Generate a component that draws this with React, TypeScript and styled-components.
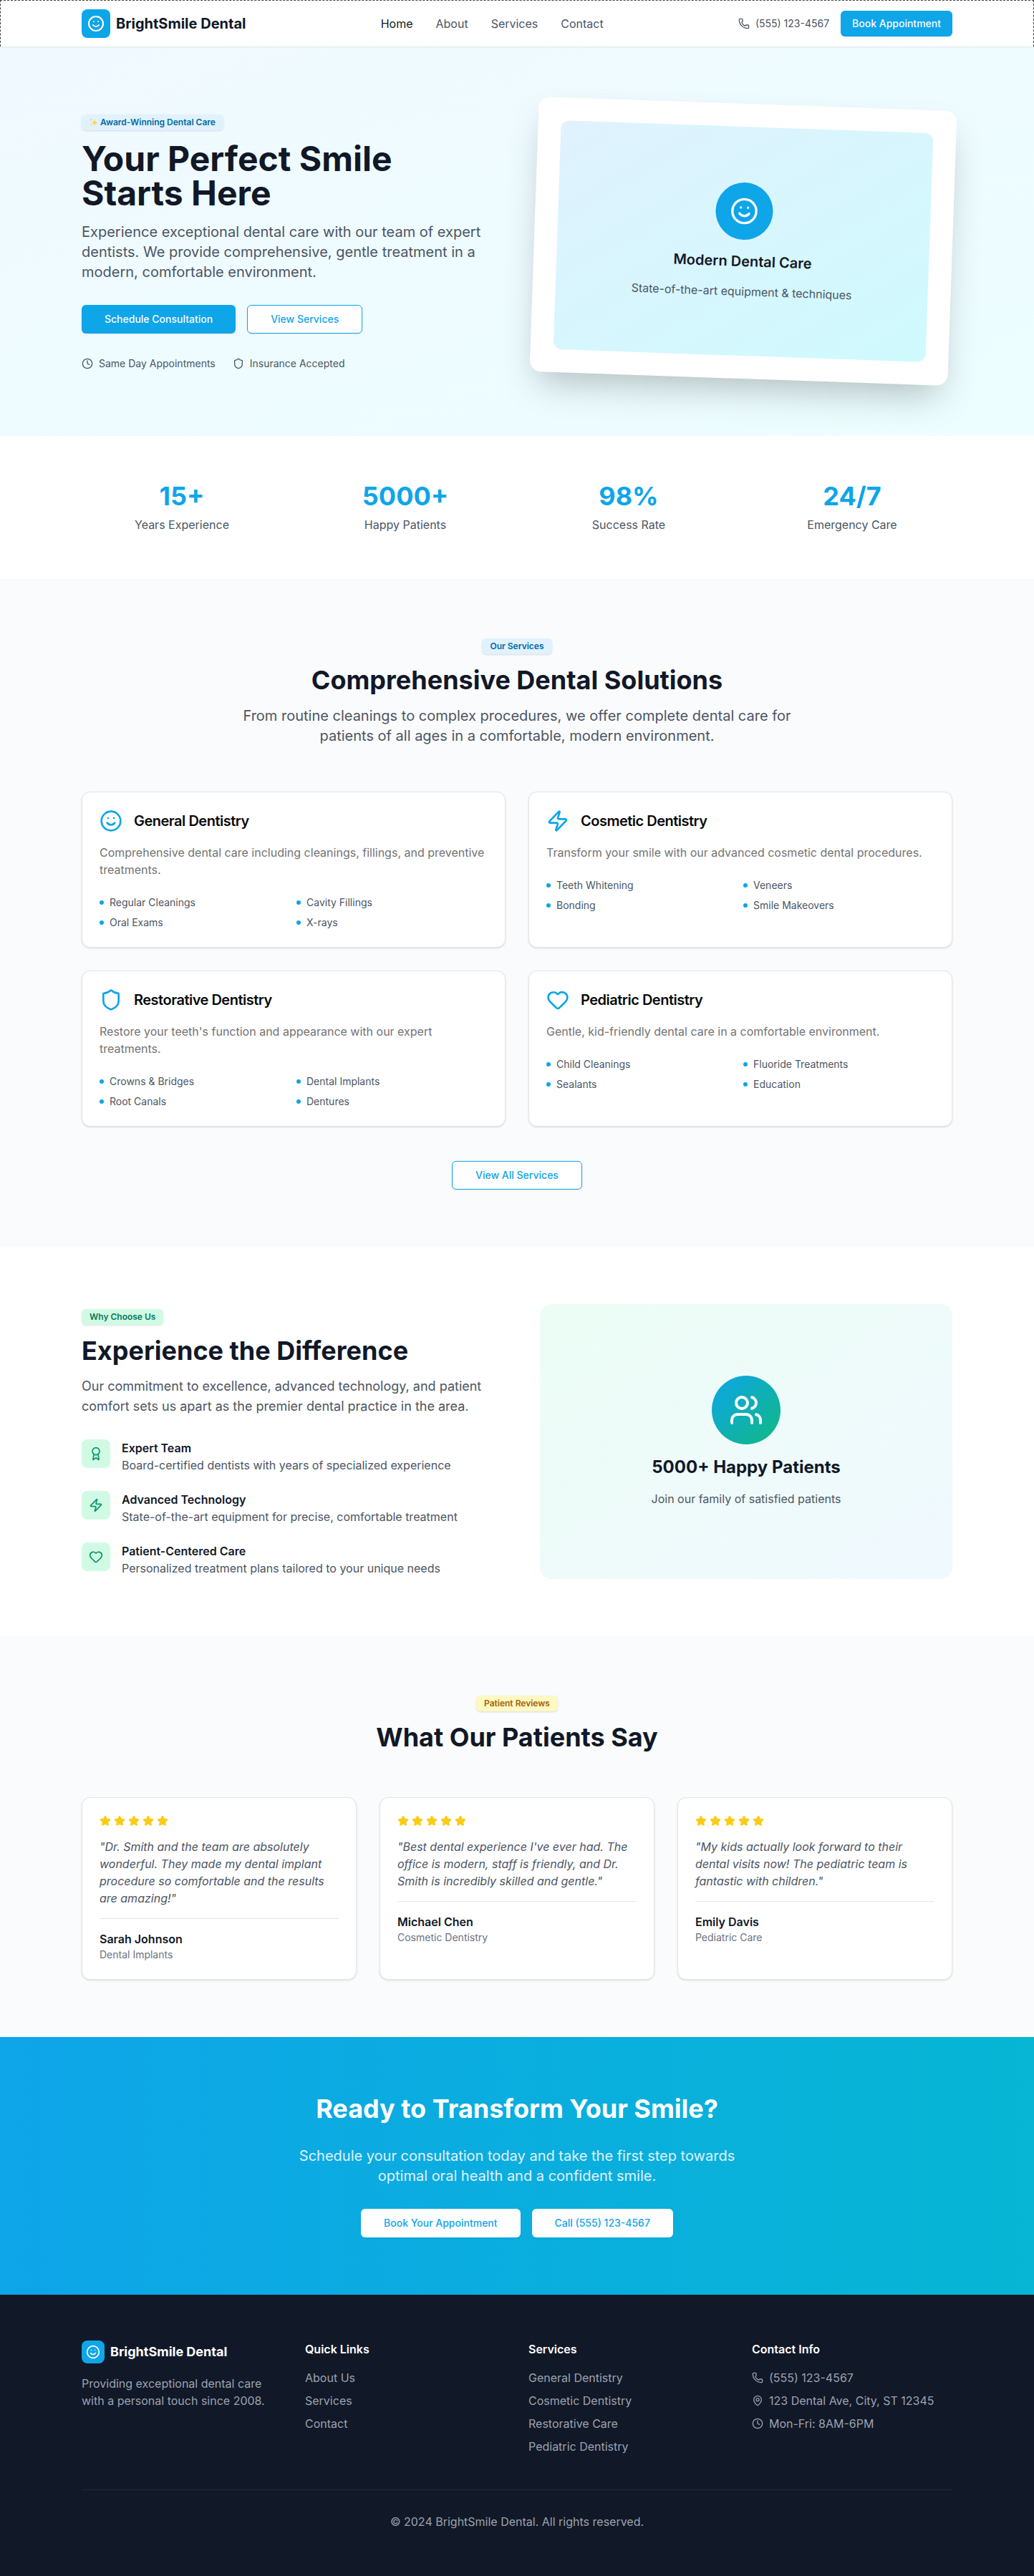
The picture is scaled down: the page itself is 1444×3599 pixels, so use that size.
import React from "react";
import styled, { createGlobalStyle } from "styled-components";
import {
  Award,
  Clock,
  Heart,
  MapPin,
  Phone,
  Shield,
  Smile,
  Star,
  Users,
  Zap,
  type LucideIcon,
} from "lucide-react";

const c = {
  primary: "#0ea5e9",
  ink: "#111827",
  body: "#4b5563",
  faint: "#9ca3af",
  line: "#e5e5e5",
  panel: "#fafbfc",
};

const GlobalStyle = createGlobalStyle`
  *, *::before, *::after { box-sizing: border-box; }
  body {
    margin: 0;
    background: #ffffff;
    color: #0a0a0a;
    font-family: Inter, "Noto Sans", "Liberation Sans", sans-serif;
    font-size: 16px;
    line-height: 24px;
  }
  h1, h2, h3, h4, p, ul, blockquote, figure { margin: 0; padding: 0; }
  ul { list-style: none; }
  a { color: inherit; text-decoration: none; }
  svg { display: block; flex-shrink: 0; }
`;

const Container = styled.div`
  width: 100%;
  max-width: 1280px;
  margin: 0 auto;
  padding: 0 32px;
`;

/* ---------- shared parts ---------- */

const Button = styled.button<{ $variant?: "solid" | "outline" | "white"; $size?: "md" | "lg" }>`
  display: inline-flex;
  align-items: center;
  justify-content: center;
  height: ${(p) => (p.$size === "md" ? 36 : 40)}px;
  padding: 0 ${(p) => (p.$size === "md" ? 16 : 32)}px;
  border: ${(p) => (p.$variant === "outline" ? `1px solid ${c.primary}` : "0")};
  border-radius: 6px;
  background: ${(p) => (p.$variant ? "#ffffff" : c.primary)};
  color: ${(p) => (p.$variant ? c.primary : "#fafafa")};
  box-shadow: 0 1px 2px rgba(0, 0, 0, 0.08);
  font: inherit;
  font-size: 14px;
  font-weight: 500;
  line-height: 20px;
  white-space: nowrap;
  cursor: pointer;
`;

const tones = {
  sky: { bg: "#e0f2fe", fg: "#0369a1" },
  green: { bg: "#d1fae5", fg: "#047857" },
  yellow: { bg: "#fef9c3", fg: "#a16207" },
};

const BadgeLine = styled.div`
  height: 25px;
  padding-top: 3px;
  margin-bottom: 16px;
`;

const Badge = styled.span<{ $tone: keyof typeof tones }>`
  display: inline-flex;
  align-items: center;
  gap: 3px;
  height: 22px;
  padding: 0 11px;
  border-radius: 6px;
  background: ${(p) => tones[p.$tone].bg};
  color: ${(p) => tones[p.$tone].fg};
  box-shadow: 0 1px 3px rgba(0, 0, 0, 0.1), 0 1px 2px -1px rgba(0, 0, 0, 0.1);
  font-size: 12px;
  font-weight: 600;
  line-height: 16px;
  vertical-align: top;
`;

const Heading = styled.h2`
  font-size: 36px;
  font-weight: 700;
  line-height: 40px;
  color: ${c.ink};
`;

const Lead = styled.p`
  margin-top: 16px;
  font-size: 20px;
  line-height: 28px;
  color: ${c.body};
`;

const SectionHead = styled.div`
  max-width: 768px;
  margin: 0 auto 64px;
  text-align: center;
`;

const Section = styled.section<{ $tint?: boolean }>`
  padding: 80px 0;
  background: ${(p) => (p.$tint ? c.panel : "#ffffff")};
`;

const Card = styled.article`
  padding: 24px;
  border: 1px solid ${c.line};
  border-radius: 12px;
  background: #ffffff;
  box-shadow: 0 1px 3px rgba(0, 0, 0, 0.1), 0 1px 2px -1px rgba(0, 0, 0, 0.1);
`;

/* ---------- header ---------- */

const Header = styled.header`
  position: relative;
  z-index: 1;
  border: 1px dashed #404040;
  border-bottom: 0;
  background: #ffffff;
  box-shadow: 0 1px 0 #e5e7eb, 0 1px 2px rgba(0, 0, 0, 0.05);
`;

const HeaderRow = styled(Container)`
  display: flex;
  align-items: center;
  justify-content: space-between;
  height: 64px;
`;

const Brand = styled.a<{ $small?: boolean }>`
  display: flex;
  align-items: center;
  gap: 8px;
  font-size: ${(p) => (p.$small ? 18 : 20)}px;
  line-height: 28px;
  font-weight: 700;
  color: ${(p) => (p.$small ? "#ffffff" : c.ink)};
`;

const BrandMark = styled.span<{ $small?: boolean }>`
  display: grid;
  place-items: center;
  width: ${(p) => (p.$small ? 32 : 40)}px;
  height: ${(p) => (p.$small ? 32 : 40)}px;
  border-radius: 8px;
  background: ${c.primary};
  color: #ffffff;
`;

const Nav = styled.nav`
  display: flex;
  gap: 32px;
`;

const NavLink = styled.a<{ $active?: boolean }>`
  color: ${(p) => (p.$active ? c.ink : c.body)};
`;

const HeaderActions = styled.div`
  display: flex;
  align-items: center;
  gap: 16px;
`;

const IconText = styled.span`
  display: flex;
  align-items: center;
  gap: 8px;
  font-size: 14px;
  line-height: 20px;
  color: ${c.body};
`;

/* ---------- hero ---------- */

const Hero = styled.section`
  padding: 80px 0;
  background: linear-gradient(to bottom right, #f0f9ff, #ecfeff);
`;

const Split = styled(Container)<{ $gap: number }>`
  display: grid;
  grid-template-columns: 1fr 1fr;
  align-items: center;
  gap: ${(p) => p.$gap}px;
`;

const HeroTitle = styled.h1`
  font-size: 48px;
  font-weight: 700;
  line-height: 48px;
  color: ${c.ink};
`;

const ButtonRow = styled.div<{ $center?: boolean; $top: number }>`
  display: flex;
  flex-wrap: wrap;
  justify-content: ${(p) => (p.$center ? "center" : "flex-start")};
  gap: 16px;
  margin-top: ${(p) => p.$top}px;
`;

const Perks = styled.div`
  display: flex;
  gap: 24px;
  margin-top: 32px;
`;

const TiltCard = styled.div`
  padding: 32px;
  border-radius: 16px;
  background: #ffffff;
  box-shadow: 0 25px 50px -12px rgba(0, 0, 0, 0.25);
  transform: rotate(2deg);
`;

const Showcase = styled.div<{ $kind: "hero" | "why" }>`
  display: flex;
  flex-direction: column;
  align-items: center;
  justify-content: center;
  gap: 16px;
  height: ${(p) => (p.$kind === "hero" ? 320 : 384)}px;
  border-radius: ${(p) => (p.$kind === "hero" ? 12 : 16)}px;
  background: ${(p) =>
    p.$kind === "hero"
      ? "linear-gradient(to bottom right, #e0f2fe, #cffafe)"
      : "linear-gradient(to bottom right, #ecfdf5, #f0f9ff)"};
  color: ${c.body};
  text-align: center;
`;

const Disc = styled.span<{ $kind: "hero" | "why" }>`
  display: grid;
  place-items: center;
  width: ${(p) => (p.$kind === "hero" ? 80 : 96)}px;
  height: ${(p) => (p.$kind === "hero" ? 80 : 96)}px;
  border-radius: 50%;
  background: ${(p) =>
    p.$kind === "hero" ? c.primary : "linear-gradient(to bottom right, #0ea5e9, #10b981)"};
  color: #ffffff;
`;

const ShowcaseTitle = styled.h3<{ $kind: "hero" | "why" }>`
  font-size: ${(p) => (p.$kind === "hero" ? 20 : 24)}px;
  line-height: ${(p) => (p.$kind === "hero" ? 28 : 32)}px;
  font-weight: ${(p) => (p.$kind === "hero" ? 600 : 700)};
  color: ${c.ink};
`;

/* ---------- stats ---------- */

const StatsBand = styled.section`
  padding: 64px 0;
  background: #ffffff;
`;

const StatsGrid = styled(Container)`
  display: grid;
  grid-template-columns: repeat(4, 1fr);
  gap: 32px;
  text-align: center;
`;

const StatValue = styled.div`
  margin-bottom: 8px;
  font-size: 36px;
  font-weight: 700;
  line-height: 40px;
  color: ${c.primary};
`;

const StatLabel = styled.div`
  color: ${c.body};
`;

/* ---------- services ---------- */

const ServiceGrid = styled.div`
  display: grid;
  grid-template-columns: 1fr 1fr;
  gap: 32px;
`;

const ServiceHead = styled.div`
  display: flex;
  align-items: center;
  gap: 16px;
  color: ${c.primary};
`;

const ServiceTitle = styled.h3`
  font-size: 20px;
  font-weight: 600;
  line-height: 28px;
  letter-spacing: -0.025em;
  color: #0a0a0a;
`;

const ServiceText = styled.p`
  margin: 16px 0 24px;
  color: #737373;
`;

const FeatureList = styled.ul`
  display: grid;
  grid-template-columns: 1fr 1fr;
  gap: 8px;
`;

const Feature = styled.li`
  display: flex;
  align-items: center;
  gap: 8px;
  font-size: 14px;
  line-height: 20px;
  color: ${c.body};

  &::before {
    content: "";
    width: 6px;
    height: 6px;
    border-radius: 50%;
    background: ${c.primary};
  }
`;

/* ---------- why us ---------- */

const WhyLead = styled.p`
  margin: 16px 0 32px;
  font-size: 18px;
  line-height: 28px;
  color: ${c.body};
`;

const ReasonList = styled.ul`
  display: grid;
  gap: 24px;
`;

const Reason = styled.li`
  display: flex;
  gap: 16px;
  color: ${c.body};
`;

const ReasonIcon = styled.span`
  display: grid;
  place-items: center;
  flex-shrink: 0;
  width: 40px;
  height: 40px;
  border-radius: 8px;
  background: #d1fae5;
  color: #059669;
`;

const Strong = styled.h4`
  font-size: 16px;
  font-weight: 600;
  line-height: 24px;
  color: ${c.ink};
`;

/* ---------- reviews ---------- */

const ReviewGrid = styled.div`
  display: grid;
  grid-template-columns: repeat(3, 1fr);
  gap: 32px;
`;

const Stars = styled.div`
  display: flex;
  gap: 4px;
  color: #facc15;
`;

const Quote = styled.blockquote`
  margin: 16px 0;
  font-style: italic;
  color: ${c.body};
`;

const Author = styled.div`
  padding-top: 16px;
  border-top: 1px solid ${c.line};
`;

const Treatment = styled.p`
  font-size: 14px;
  line-height: 20px;
  color: #6b7280;
`;

/* ---------- call to action ---------- */

const Cta = styled.section`
  padding: 80px 0;
  background: linear-gradient(to right, #0ea5e9, #06b6d4);
  text-align: center;
`;

const CtaTitle = styled(Heading)`
  color: #ffffff;
`;

const CtaText = styled.p`
  max-width: 672px;
  margin: 32px auto 0;
  font-size: 20px;
  line-height: 28px;
  color: #e0f2fe;
`;

/* ---------- footer ---------- */

const Footer = styled.footer`
  padding: 64px 0;
  background: ${c.ink};
  color: ${c.faint};
`;

const FooterGrid = styled.div`
  display: grid;
  grid-template-columns: repeat(4, 1fr);
  gap: 32px;
`;

const FooterText = styled.p`
  margin-top: 16px;
`;

const FooterTitle = styled.h4`
  margin-bottom: 16px;
  font-size: 16px;
  font-weight: 600;
  line-height: 24px;
  color: #ffffff;
`;

const FooterList = styled.ul`
  display: grid;
  gap: 8px;
`;

const ContactItem = styled.li`
  display: flex;
  align-items: center;
  gap: 8px;
`;

const Copyright = styled.p`
  margin-top: 48px;
  padding-top: 32px;
  border-top: 1px solid #1f2937;
  text-align: center;
`;

/* ---------- data ---------- */

const stats = [
  ["15+", "Years Experience"],
  ["5000+", "Happy Patients"],
  ["98%", "Success Rate"],
  ["24/7", "Emergency Care"],
];

const services: { icon: LucideIcon; title: string; text: string; items: string[] }[] = [
  {
    icon: Smile,
    title: "General Dentistry",
    text: "Comprehensive dental care including cleanings, fillings, and preventive treatments.",
    items: ["Regular Cleanings", "Cavity Fillings", "Oral Exams", "X-rays"],
  },
  {
    icon: Zap,
    title: "Cosmetic Dentistry",
    text: "Transform your smile with our advanced cosmetic dental procedures.",
    items: ["Teeth Whitening", "Veneers", "Bonding", "Smile Makeovers"],
  },
  {
    icon: Shield,
    title: "Restorative Dentistry",
    text: "Restore your teeth's function and appearance with our expert treatments.",
    items: ["Crowns & Bridges", "Dental Implants", "Root Canals", "Dentures"],
  },
  {
    icon: Heart,
    title: "Pediatric Dentistry",
    text: "Gentle, kid-friendly dental care in a comfortable environment.",
    items: ["Child Cleanings", "Fluoride Treatments", "Sealants", "Education"],
  },
];

const reasons: { icon: LucideIcon; title: string; text: string }[] = [
  { icon: Award, title: "Expert Team", text: "Board-certified dentists with years of specialized experience" },
  { icon: Zap, title: "Advanced Technology", text: "State-of-the-art equipment for precise, comfortable treatment" },
  { icon: Heart, title: "Patient-Centered Care", text: "Personalized treatment plans tailored to your unique needs" },
];

const reviews = [
  {
    quote:
      "Dr. Smith and the team are absolutely wonderful. They made my dental implant procedure so comfortable and the results are amazing!",
    name: "Sarah Johnson",
    treatment: "Dental Implants",
  },
  {
    quote:
      "Best dental experience I've ever had. The office is modern, staff is friendly, and Dr. Smith is incredibly skilled and gentle.",
    name: "Michael Chen",
    treatment: "Cosmetic Dentistry",
  },
  {
    quote:
      "My kids actually look forward to their dental visits now! The pediatric team is fantastic with children.",
    name: "Emily Davis",
    treatment: "Pediatric Care",
  },
];

const footerLinks = [
  { title: "Quick Links", links: ["About Us", "Services", "Contact"] },
  {
    title: "Services",
    links: ["General Dentistry", "Cosmetic Dentistry", "Restorative Care", "Pediatric Dentistry"],
  },
];

function Sparkles() {
  return (
    <svg width="12" height="12" viewBox="0 0 24 24" fill="#fcd34d" aria-hidden="true">
      <path d="M14 3c1 6.500 2.500 8.500 9 10-6.500 1.500-8 3.500-9 10-1-6.500-2.500-8.500-9-10 6.500-1.500 8-3.500 9-10z" />
      <path d="M4 1c.5 2.800 1.200 3.500 4 4-2.800.5-3.500 1.200-4 4-.5-2.800-1.200-3.500-4-4 2.800-.5 3.500-1.200 4-4z" />
      <path d="M4 15c.4 2.200 1 2.800 3 3-2 .3-2.600 1-3 3-.4-2-1-2.700-3-3 2-.2 2.600-.8 3-3z" />
    </svg>
  );
}

export default function App() {
  return (
    <>
      <GlobalStyle />
      <Header>
        <HeaderRow>
          <Brand href="#">
            <BrandMark>
              <Smile size={24} />
            </BrandMark>
            BrightSmile Dental
          </Brand>
          <Nav>
            <NavLink href="#" $active>Home</NavLink>
            <NavLink href="#about">About</NavLink>
            <NavLink href="#services">Services</NavLink>
            <NavLink href="#contact">Contact</NavLink>
          </Nav>
          <HeaderActions>
            <IconText>
              <Phone size={16} />
              (555) 123-4567
            </IconText>
            <Button $size="md">Book Appointment</Button>
          </HeaderActions>
        </HeaderRow>
      </Header>

      <main>
        <Hero>
          <Split $gap={48}>
            <div>
              <BadgeLine>
                <Badge $tone="sky">
                  <Sparkles />
                  Award-Winning Dental Care
                </Badge>
              </BadgeLine>
              <HeroTitle>
                Your Perfect Smile
                <br />
                Starts Here
              </HeroTitle>
              <Lead>
                Experience exceptional dental care with our team of expert dentists. We provide
                comprehensive, gentle treatment in a modern, comfortable environment.
              </Lead>
              <ButtonRow $top={32}>
                <Button>Schedule Consultation</Button>
                <Button $variant="outline">View Services</Button>
              </ButtonRow>
              <Perks>
                <IconText>
                  <Clock size={16} />
                  Same Day Appointments
                </IconText>
                <IconText>
                  <Shield size={16} />
                  Insurance Accepted
                </IconText>
              </Perks>
            </div>
            <TiltCard>
              <Showcase $kind="hero">
                <Disc $kind="hero">
                  <Smile size={40} />
                </Disc>
                <ShowcaseTitle $kind="hero">Modern Dental Care</ShowcaseTitle>
                <p>State-of-the-art equipment &amp; techniques</p>
              </Showcase>
            </TiltCard>
          </Split>
        </Hero>

        <StatsBand>
          <StatsGrid>
            {stats.map(([value, label]) => (
              <div key={label}>
                <StatValue>{value}</StatValue>
                <StatLabel>{label}</StatLabel>
              </div>
            ))}
          </StatsGrid>
        </StatsBand>

        <Section $tint id="services">
          <Container>
            <SectionHead>
              <BadgeLine>
                <Badge $tone="sky">Our Services</Badge>
              </BadgeLine>
              <Heading>Comprehensive Dental Solutions</Heading>
              <Lead>
                From routine cleanings to complex procedures, we offer complete dental care for
                patients of all ages in a comfortable, modern environment.
              </Lead>
            </SectionHead>
            <ServiceGrid>
              {services.map(({ icon: Icon, title, text, items }) => (
                <Card key={title}>
                  <ServiceHead>
                    <Icon size={32} />
                    <ServiceTitle>{title}</ServiceTitle>
                  </ServiceHead>
                  <ServiceText>{text}</ServiceText>
                  <FeatureList>
                    {items.map((item) => (
                      <Feature key={item}>{item}</Feature>
                    ))}
                  </FeatureList>
                </Card>
              ))}
            </ServiceGrid>
            <ButtonRow $center $top={48}>
              <Button $variant="outline">View All Services</Button>
            </ButtonRow>
          </Container>
        </Section>

        <Section id="about">
          <Split $gap={64}>
            <div>
              <BadgeLine>
                <Badge $tone="green">Why Choose Us</Badge>
              </BadgeLine>
              <Heading>Experience the Difference</Heading>
              <WhyLead>
                Our commitment to excellence, advanced technology, and patient comfort sets us apart
                as the premier dental practice in the area.
              </WhyLead>
              <ReasonList>
                {reasons.map(({ icon: Icon, title, text }) => (
                  <Reason key={title}>
                    <ReasonIcon>
                      <Icon size={20} />
                    </ReasonIcon>
                    <div>
                      <Strong>{title}</Strong>
                      <p>{text}</p>
                    </div>
                  </Reason>
                ))}
              </ReasonList>
            </div>
            <Showcase $kind="why">
              <Disc $kind="why">
                <Users size={48} />
              </Disc>
              <ShowcaseTitle $kind="why">5000+ Happy Patients</ShowcaseTitle>
              <p>Join our family of satisfied patients</p>
            </Showcase>
          </Split>
        </Section>

        <Section $tint>
          <Container>
            <SectionHead>
              <BadgeLine>
                <Badge $tone="yellow">Patient Reviews</Badge>
              </BadgeLine>
              <Heading>What Our Patients Say</Heading>
            </SectionHead>
            <ReviewGrid>
              {reviews.map(({ quote, name, treatment }) => (
                <Card key={name}>
                  <Stars role="img" aria-label="5 out of 5 stars">
                    {[1, 2, 3, 4, 5].map((n) => (
                      <Star key={n} size={16} fill="currentColor" />
                    ))}
                  </Stars>
                  <Quote>{`"${quote}"`}</Quote>
                  <Author>
                    <Strong>{name}</Strong>
                    <Treatment>{treatment}</Treatment>
                  </Author>
                </Card>
              ))}
            </ReviewGrid>
          </Container>
        </Section>

        <Cta>
          <Container>
            <CtaTitle>Ready to Transform Your Smile?</CtaTitle>
            <CtaText>
              Schedule your consultation today and take the first step towards optimal oral health
              and a confident smile.
            </CtaText>
            <ButtonRow $center $top={32}>
              <Button $variant="white">Book Your Appointment</Button>
              <Button $variant="white">Call (555) 123-4567</Button>
            </ButtonRow>
          </Container>
        </Cta>
      </main>

      <Footer id="contact">
        <Container>
          <FooterGrid>
            <div>
              <Brand href="#" $small>
                <BrandMark $small>
                  <Smile size={20} />
                </BrandMark>
                BrightSmile Dental
              </Brand>
              <FooterText>
                Providing exceptional dental care with a personal touch since 2008.
              </FooterText>
            </div>
            {footerLinks.map(({ title, links }) => (
              <div key={title}>
                <FooterTitle>{title}</FooterTitle>
                <FooterList>
                  {links.map((link) => (
                    <li key={link}>
                      <a href="#">{link}</a>
                    </li>
                  ))}
                </FooterList>
              </div>
            ))}
            <div>
              <FooterTitle>Contact Info</FooterTitle>
              <FooterList>
                <ContactItem>
                  <Phone size={16} />
                  (555) 123-4567
                </ContactItem>
                <ContactItem>
                  <MapPin size={16} />
                  123 Dental Ave, City, ST 12345
                </ContactItem>
                <ContactItem>
                  <Clock size={16} />
                  Mon-Fri: 8AM-6PM
                </ContactItem>
              </FooterList>
            </div>
          </FooterGrid>
          <Copyright>© 2024 BrightSmile Dental. All rights reserved.</Copyright>
        </Container>
      </Footer>
    </>
  );
}
